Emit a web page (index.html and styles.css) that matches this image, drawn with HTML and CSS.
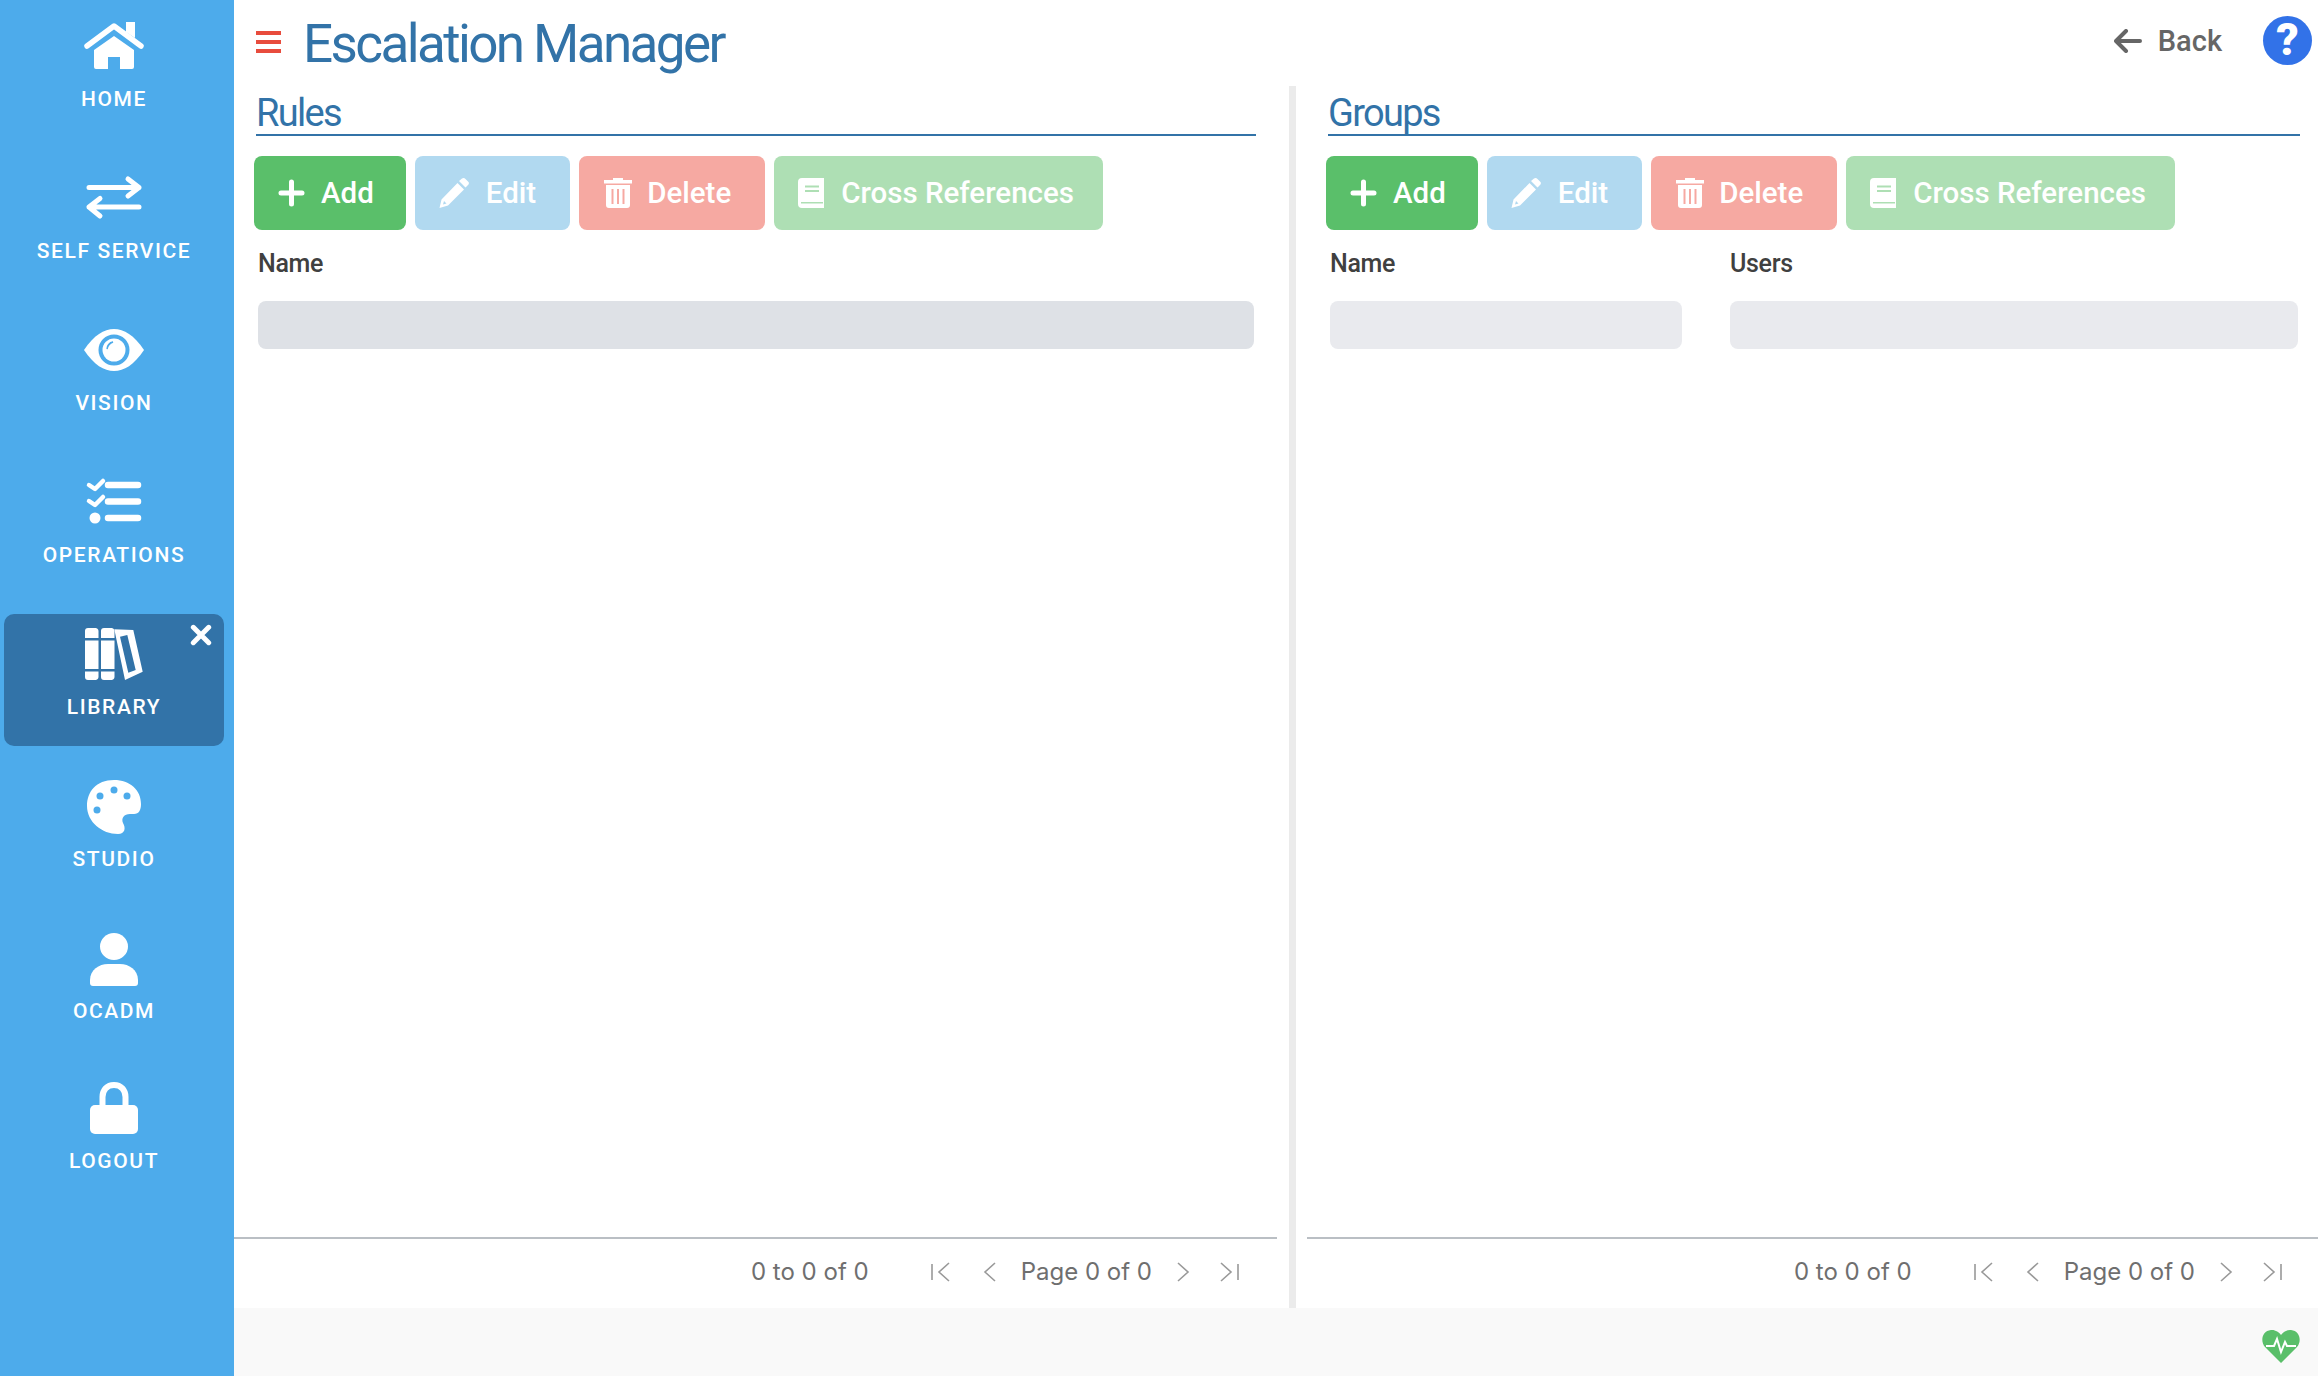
FILE: index.html
```html
<!DOCTYPE html>
<html lang="en">
<head>
    <meta charset="UTF-8">
    <title>Escalation Manager</title>
    <link rel="stylesheet" href="styles.css">
</head>
<body>
    <svg class="sprites" width="0" height="0">
        <symbol id="i-plus" viewBox="0 0 30 30"><path d="M13.500 4V26M3 15H24" fill="none" stroke="currentColor" stroke-width="5" stroke-linecap="round"/></symbol>
        <symbol id="i-pencil" viewBox="0 0 30 30"><path d="M20 3L23 0.500Q25 -0.500 26.500 1L29.500 4Q30.500 5.500 29 7L26.500 9.500ZM18.500 5L25 11.500L9 27.500L0.500 30L2.500 21.500ZM5 23L7.500 25.500L4 26.500Z" fill="currentColor" fill-rule="evenodd"/></symbol>
        <symbol id="i-trash" viewBox="0 0 30 30"><path d="M1 2H10V0H20V2H29V5.500H1ZM3 7H27V27A3 3 0 0 1 24 30H6A3 3 0 0 1 3 27ZM8.500 11V26H10.500V11ZM14 11V26H16V11ZM19.500 11V26H21.500V11Z" fill="currentColor" fill-rule="evenodd"/></symbol>
        <symbol id="i-book" viewBox="0 0 30 30"><path d="M4 0H26V30H4A4 4 0 0 1 0 26V4A4 4 0 0 1 4 0ZM7 7.500V9.500H21V7.500ZM7 12V14H21V12ZM3 24V25.500H25V24Z" fill="currentColor" fill-rule="evenodd"/></symbol>
        <symbol id="i-first" viewBox="0 0 22 22"><path d="M2 3V19M19 2L9 11L19 20" fill="none" stroke="currentColor" stroke-width="1.6"/></symbol>
        <symbol id="i-prev" viewBox="0 0 22 22"><path d="M16 2L6 11L16 20" fill="none" stroke="currentColor" stroke-width="1.6"/></symbol>
        <symbol id="i-next" viewBox="0 0 22 22"><path d="M6 2L16 11L6 20" fill="none" stroke="currentColor" stroke-width="1.6"/></symbol>
        <symbol id="i-last" viewBox="0 0 22 22"><path d="M20 3V19M3 2L13 11L3 20" fill="none" stroke="currentColor" stroke-width="1.6"/></symbol>
    </svg>

    <div class="app">
        <nav class="sidebar">
            <a class="nav-item">
                <svg class="nav-icon" viewBox="0 0 60 56"><path d="M3 28L30 8L57 28" fill="none" stroke="#fff" stroke-width="5.5" stroke-linecap="round" stroke-linejoin="round"/><path d="M42 4H51V20L42 14Z" fill="#fff"/><path d="M30 18L50 32V49A2 2 0 0 1 48 51H36V39H24V51H12A2 2 0 0 1 10 49V32Z" fill="#fff"/></svg>
                <span>HOME</span>
            </a>
            <a class="nav-item">
                <svg class="nav-icon" viewBox="0 0 60 56"><path d="M5 17.500H55M44 9L55 17.500L44 26M55 37H5M16 28.500L5 37L16 46" fill="none" stroke="#fff" stroke-width="5" stroke-linecap="round" stroke-linejoin="round"/></svg>
                <span>SELF SERVICE</span>
            </a>
            <a class="nav-item">
                <svg class="nav-icon" viewBox="0 0 60 56"><path d="M0 28C10 13 20 7 30 7C40 7 50 13 60 28C50 43 40 49 30 49C20 49 10 43 0 28Z" fill="#fff"/><circle cx="30" cy="28" r="15.500" fill="#4dabeb"/><circle cx="30" cy="28" r="11.500" fill="#fff"/><path d="M29 20A7 7 0 0 0 23 27A9 9 0 0 1 29 20Z" fill="#4dabeb" stroke="#4dabeb" stroke-width="1.500"/></svg>
                <span>VISION</span>
            </a>
            <a class="nav-item">
                <svg class="nav-icon" viewBox="0 0 60 56"><path d="M24 11H54M24 27.500H54M24 44H54" fill="none" stroke="#fff" stroke-width="6.500" stroke-linecap="round"/><path d="M5 11L11 15L19 7M5 27L11 31L19 23" fill="none" stroke="#fff" stroke-width="4.500" stroke-linecap="round" stroke-linejoin="round"/><circle cx="11" cy="44" r="5.500" fill="#fff"/></svg>
                <span>OPERATIONS</span>
            </a>
            <a class="nav-item active">
                <svg class="nav-icon" viewBox="0 0 60 56"><path d="M4 2H11A3 3 0 0 1 14.500 5V12H1V5A3 3 0 0 1 4 2ZM1 14.500H14.500V43H1ZM1 45.500H14.500V51A3 3 0 0 1 11 54H4A3 3 0 0 1 1 51ZM20 2H27A3 3 0 0 1 30.500 5V12H17V5A3 3 0 0 1 20 2ZM17 14.500H30.500V43H17ZM17 45.500H30.500V51A3 3 0 0 1 27 54H20A3 3 0 0 1 17 51Z" fill="#fff"/><path d="M30.300 3.300L49.300 4L58.700 45.700L41 54ZM36 10.700L44.300 46.700L51.700 44L43.300 9Z" fill="#fff" fill-rule="evenodd"/></svg>
                <span>LIBRARY</span>
                <svg class="nav-close" viewBox="0 0 20 20"><path d="M3 3L17 17M17 3L3 17" stroke="#fff" stroke-width="4.500" stroke-linecap="round"/></svg>
            </a>
            <a class="nav-item">
                <svg class="nav-icon" viewBox="0 0 60 56"><path d="M30 2C12 2 3 14 3 28C3 44 18 56 34 56C41 56 42 50 39 45C37 40 40 36 46 36H50C55 36 57 32 57 26C57 12 46 2 30 2Z" fill="#fff"/><circle cx="16" cy="18" r="3.500" fill="#4dabeb"/><circle cx="30" cy="12" r="3.500" fill="#4dabeb"/><circle cx="43" cy="18" r="3.500" fill="#4dabeb"/><circle cx="13" cy="32" r="3.500" fill="#4dabeb"/></svg>
                <span>STUDIO</span>
            </a>
            <a class="nav-item">
                <svg class="nav-icon" viewBox="0 0 60 56"><ellipse cx="30" cy="16.500" rx="14" ry="13.500" fill="#fff"/><path d="M6 53V50C6 40 15 34 24 34H36C45 34 54 40 54 50V53A3 3 0 0 1 51 56H9A3 3 0 0 1 6 53Z" fill="#fff"/></svg>
                <span>OCADM</span>
            </a>
            <a class="nav-item">
                <svg class="nav-icon" viewBox="0 0 60 56"><path d="M18.500 25V15C18.500 8 23 3 30 3C37 3 41.500 8 41.500 15V25" fill="none" stroke="#fff" stroke-width="6"/><rect x="6" y="23" width="48" height="29" rx="5" fill="#fff"/></svg>
                <span>LOGOUT</span>
            </a>
        </nav>

        <div class="main">
            <header class="topbar">
                <div class="burger"><i></i><i></i><i></i></div>
                <h1>Escalation Manager</h1>
                <a class="back">
                    <svg viewBox="0 0 28 24"><path d="M26 12H3M12 2L2 12L12 22" fill="none" stroke="currentColor" stroke-width="4" stroke-linecap="round" stroke-linejoin="round"/></svg>
                    Back
                </a>
                <div class="help">?</div>
            </header>

            <div class="panels">
                <section class="panel panel-left">
                    <div class="panel-body">
                        <h2>Rules</h2>
                        <div class="toolbar">
                            <button class="btn btn-add"><svg><use href="#i-plus"/></svg>Add</button>
                            <button class="btn btn-edit"><svg><use href="#i-pencil"/></svg>Edit</button>
                            <button class="btn btn-delete"><svg><use href="#i-trash"/></svg>Delete</button>
                            <button class="btn btn-refs"><svg><use href="#i-book"/></svg>Cross References</button>
                        </div>
                        <div class="grid-head">
                            <div class="col">
                                <div class="col-name">Name</div>
                                <div class="skeleton dark"></div>
                            </div>
                        </div>
                    </div>
                    <div class="pager">
                        <span class="pager-count">0 to 0 of 0</span>
                        <svg class="pg-icon first"><use href="#i-first"/></svg>
                        <svg class="pg-icon prev"><use href="#i-prev"/></svg>
                        <span class="pager-page">Page 0 of 0</span>
                        <svg class="pg-icon next"><use href="#i-next"/></svg>
                        <svg class="pg-icon last"><use href="#i-last"/></svg>
                    </div>
                </section>

                <div class="divider"></div>

                <section class="panel panel-right">
                    <div class="panel-body">
                        <h2>Groups</h2>
                        <div class="toolbar">
                            <button class="btn btn-add"><svg><use href="#i-plus"/></svg>Add</button>
                            <button class="btn btn-edit"><svg><use href="#i-pencil"/></svg>Edit</button>
                            <button class="btn btn-delete"><svg><use href="#i-trash"/></svg>Delete</button>
                            <button class="btn btn-refs"><svg><use href="#i-book"/></svg>Cross References</button>
                        </div>
                        <div class="grid-head">
                            <div class="col col-name-w">
                                <div class="col-name">Name</div>
                                <div class="skeleton"></div>
                            </div>
                            <div class="col">
                                <div class="col-name">Users</div>
                                <div class="skeleton"></div>
                            </div>
                        </div>
                    </div>
                    <div class="pager">
                        <span class="pager-count">0 to 0 of 0</span>
                        <svg class="pg-icon first"><use href="#i-first"/></svg>
                        <svg class="pg-icon prev"><use href="#i-prev"/></svg>
                        <span class="pager-page">Page 0 of 0</span>
                        <svg class="pg-icon next"><use href="#i-next"/></svg>
                        <svg class="pg-icon last"><use href="#i-last"/></svg>
                    </div>
                </section>
            </div>

            <footer class="statusbar">
                <svg viewBox="0 0 38 34"><path d="M19 34L3 18C-2 12 0 2 9 1C13 0.500 17 3 19 6C21 3 25 0.500 29 1C38 2 40 12 35 18Z" fill="#5abf6a"/><path d="M4 17H12L15 10L19 23L23 13L25 17H34" fill="none" stroke="#fff" stroke-width="2"/></svg>
            </footer>
        </div>
    </div>
</body>
</html>
```

FILE: styles.css
```css
* {
    box-sizing: border-box;
}
html, body {
    margin: 0;
    height: 100%;
    overflow: hidden;
}
body {
    font-family: Roboto, "Liberation Sans", sans-serif;
    background: #fff;
}
.sprites {
    position: absolute;
}
.app {
    display: flex;
    height: 100vh;
}

/* sidebar */
.sidebar {
    width: 234px;
    flex: none;
    background: #4dabeb;
    padding: 6px 10px 0 4px;
    display: flex;
    flex-direction: column;
    gap: 20px;
}
.nav-item {
    position: relative;
    height: 132px;
    padding-top: 12px;
    border-radius: 10px;
    display: flex;
    flex-direction: column;
    align-items: center;
    color: #fff;
    font-size: 21px;
    font-weight: 500;
    letter-spacing: 1.6px;
}
.nav-item span {
    margin-top: 13px;
    line-height: 24px;
}
.nav-item:last-child span {
    margin-top: 11px;
}
.nav-item.active {
    background: #3273a8;
}
.nav-icon {
    width: 60px;
    height: 56px;
}
.nav-close {
    position: absolute;
    top: 10px;
    right: 12px;
    width: 22px;
    height: 22px;
}

/* main area */
.main {
    flex: 1;
    min-width: 0;
    display: flex;
    flex-direction: column;
}
.topbar {
    height: 86px;
    flex: none;
    display: flex;
    align-items: flex-start;
    padding: 16px 6px 0 22px;
}
.burger {
    width: 25px;
    margin-top: 15px;
    display: flex;
    flex-direction: column;
    gap: 5px;
}
.burger i {
    height: 4px;
    background: #e84c3d;
}
h1 {
    margin: 0 0 0 22px;
    font-size: 53px;
    line-height: 56px;
    font-weight: 400;
    color: #3273a8;
    letter-spacing: -2.600px;
    flex: 1;
}
.back {
    display: flex;
    align-items: center;
    gap: 16px;
    margin-top: 10px;
    height: 30px;
    font-size: 29px;
    font-weight: 500;
    color: #666;
}
.back svg {
    width: 28px;
    height: 24px;
}
.help {
    width: 49px;
    height: 49px;
    margin-left: 41px;
    border-radius: 50%;
    background: #3272e8;
    color: #fff;
    font-size: 44px;
    font-weight: 900;
    line-height: 49px;
    text-align: center;
}

.panels {
    flex: 1;
    min-height: 0;
    display: flex;
}
.panel {
    display: flex;
    flex-direction: column;
    min-width: 0;
}
.panel-left {
    width: 1043px;
    margin-right: 12px;
}
.panel-right {
    flex: 1;
    margin-left: 11px;
}
.divider {
    width: 7px;
    flex: none;
    background: #ebebeb;
}
.panel-body {
    flex: 1;
    min-height: 0;
}
.panel-left .panel-body {
    padding: 0 21px 0 22px;
}
.panel-right .panel-body {
    padding: 0 18px 0 21px;
}
h2 {
    margin: 0;
    height: 50px;
    border-bottom: 2px solid #3273a8;
    font-size: 38px;
    line-height: 54px;
    font-weight: 400;
    color: #3273a8;
    letter-spacing: -1.700px;
}
.toolbar {
    display: flex;
    gap: 9px;
    margin: 20px 0 0 -2px;
}
.btn {
    height: 74px;
    border: none;
    border-radius: 8px;
    padding: 0 32px 0 24px;
    display: flex;
    align-items: center;
    gap: 13px;
    color: #fff;
    font-family: Roboto, "Liberation Sans", sans-serif;
    font-size: 29.500px;
    font-weight: 500;
}
.btn svg {
    width: 30px;
    height: 30px;
}
.btn-add { background: #5abf6a; }
.btn-edit { background: #b1d9f0; gap: 17px; padding-right: 34px; }
.btn-delete { background: #f6a9a2; gap: 14px; padding-right: 34px; }
.btn-refs { background: #aedfb4; padding-right: 29px; }

.grid-head {
    display: flex;
    gap: 48px;
    padding: 0 2px;
    margin-top: 20px;
}
.col {
    flex: 1;
    min-width: 0;
}
.col-name-w {
    flex: none;
    width: 352px;
}
.col-name {
    font-size: 25px;
    font-weight: 500;
    line-height: 28px;
    color: #404040;
    letter-spacing: -0.300px;
}
.skeleton {
    height: 48px;
    margin-top: 23px;
    border-radius: 8px;
    background: #e9eaee;
}
.skeleton.dark {
    background: #dee1e6;
}

/* pager */
.pager {
    height: 71px;
    flex: none;
    border-top: 2px solid #babfc4;
    display: flex;
    align-items: center;
    justify-content: flex-end;
    padding-bottom: 4px;
    font-family: Inter, "Liberation Sans", sans-serif;
    font-size: 24px;
    color: #6f6f6f;
}
.panel-left .pager {
    padding-right: 37px;
}
.panel-right .pager {
    padding-right: 35px;
}
.pg-icon {
    width: 22px;
    height: 22px;
    color: #999;
}
.pager-count {
    margin-right: 61px;
}
.pg-icon.prev {
    margin-left: 27px;
    margin-right: 20px;
}
.pg-icon.next {
    margin-left: 20px;
    margin-right: 24px;
}
.statusbar {
    height: 68px;
    flex: none;
    background: #f9f9f9;
    display: flex;
    justify-content: flex-end;
    padding: 21px 18px 0 0;
}
.statusbar svg {
    width: 38px;
    height: 34px;
}
```
